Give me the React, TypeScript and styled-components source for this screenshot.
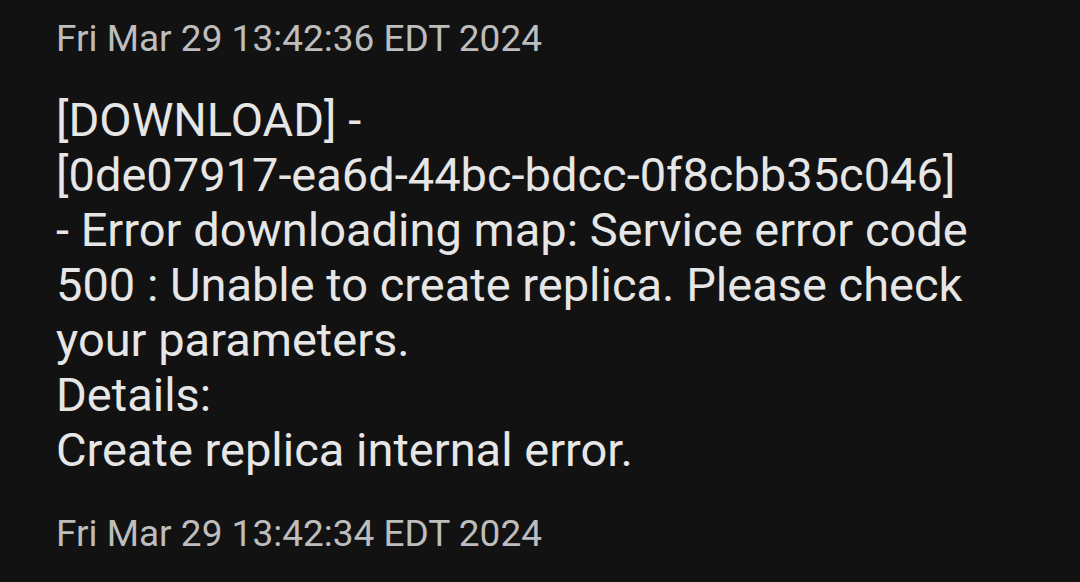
import React from "react";
import styled, { createGlobalStyle } from "styled-components";

const Global = createGlobalStyle`
  html, body { margin: 0; padding: 0; background: #121212; }
  body { font-family: Roboto, "Noto Sans", sans-serif; }
`;

const Page = styled.div`
  width: 1080px;
  height: 582px;
  overflow: hidden;
  background: #121212;
  box-sizing: border-box;
  padding: 15px 40px 0 56px;
  display: flex;
  flex-direction: column;
`;

const Stamp = styled.div`
  color: #bdbdbd;
  font-size: 37px;
  line-height: 48px;
`;

const Message = styled.div`
  color: #e6e6e6;
  font-size: 47px;
  line-height: 55px;
  margin: 29px 0 33px;
  white-space: pre-line;
`;

const lines = [
  "[DOWNLOAD] -",
  "[0de07917-ea6d-44bc-bdcc-0f8cbb35c046]",
  "- Error downloading map: Service error code",
  "500 : Unable to create replica. Please check",
  "your parameters.",
  "Details:",
  "Create replica internal error.",
];

export default function App() {
  return (
    <>
      <Global />
      <Page>
        <Stamp>Fri Mar 29 13:42:36 EDT 2024</Stamp>
        <Message>{lines.join("\n")}</Message>
        <Stamp>Fri Mar 29 13:42:34 EDT 2024</Stamp>
      </Page>
    </>
  );
}
